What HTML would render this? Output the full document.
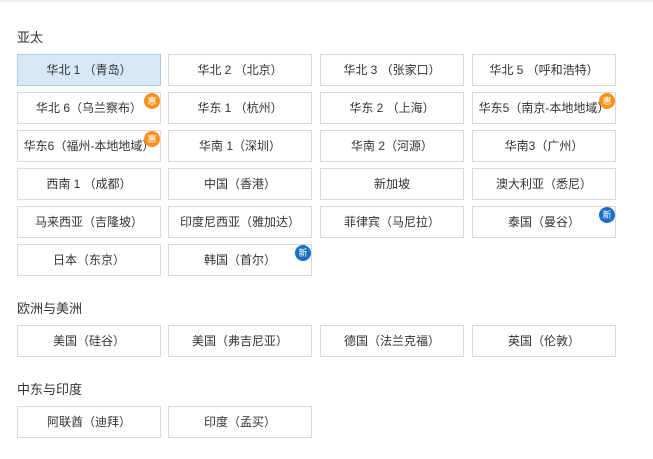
<!DOCTYPE html>
<html><head><meta charset="utf-8"><style>
body{margin:0;width:653px;height:459px;background:#fff;font-family:"Liberation Sans","Noto Sans CJK SC",sans-serif;position:relative;overflow:hidden;border-top:2px solid #eee;box-sizing:border-box}
.h{position:absolute;left:17px;font-size:13px;color:#333}
.b{position:absolute;width:142px;height:30px;border:1px solid #d9d9d9;background:#fff;font-size:12px;color:#333;text-align:center;line-height:30px;white-space:nowrap}
.sel{background:#d6e8f6;border-color:#a9cde9}
.g{position:absolute;top:0;right:0;width:16px;height:16px;border-radius:50%;color:#fff;font-size:9px;line-height:16px;text-align:center}
.o{background:#f7921e}.n{background:#1a6fc4}
</style></head><body>
<div class="h" style="top:25px">亚太</div>
<div class="b sel" style="left:17px;top:52px">华北 1 （青岛）</div>
<div class="b" style="left:168px;top:52px">华北 2 （北京）</div>
<div class="b" style="left:320px;top:52px">华北 3 （张家口）</div>
<div class="b" style="left:472px;top:52px">华北 5 （呼和浩特）</div>
<div class="b" style="left:17px;top:90px">华北 6（乌兰察布）<span class="g o">惠</span></div>
<div class="b" style="left:168px;top:90px">华东 1 （杭州）</div>
<div class="b" style="left:320px;top:90px">华东 2 （上海）</div>
<div class="b" style="left:472px;top:90px">华东5（南京-本地地域）<span class="g o">惠</span></div>
<div class="b" style="left:17px;top:128px">华东6（福州-本地地域）<span class="g o">惠</span></div>
<div class="b" style="left:168px;top:128px">华南 1（深圳）</div>
<div class="b" style="left:320px;top:128px">华南 2（河源）</div>
<div class="b" style="left:472px;top:128px">华南3（广州）</div>
<div class="b" style="left:17px;top:166px">西南 1 （成都）</div>
<div class="b" style="left:168px;top:166px">中国（香港）</div>
<div class="b" style="left:320px;top:166px">新加坡</div>
<div class="b" style="left:472px;top:166px">澳大利亚（悉尼）</div>
<div class="b" style="left:17px;top:204px">马来西亚（吉隆坡）</div>
<div class="b" style="left:168px;top:204px">印度尼西亚（雅加达）</div>
<div class="b" style="left:320px;top:204px">菲律宾（马尼拉）</div>
<div class="b" style="left:472px;top:204px">泰国（曼谷）<span class="g n">新</span></div>
<div class="b" style="left:17px;top:242px">日本（东京）</div>
<div class="b" style="left:168px;top:242px">韩国（首尔）<span class="g n">新</span></div>
<div class="h" style="top:296px">欧洲与美洲</div>
<div class="b" style="left:17px;top:323px">美国（硅谷）</div>
<div class="b" style="left:168px;top:323px">美国（弗吉尼亚）</div>
<div class="b" style="left:320px;top:323px">德国（法兰克福）</div>
<div class="b" style="left:472px;top:323px">英国（伦敦）</div>
<div class="h" style="top:377px">中东与印度</div>
<div class="b" style="left:17px;top:404px">阿联酋（迪拜）</div>
<div class="b" style="left:168px;top:404px">印度（孟买）</div>
</body></html>
